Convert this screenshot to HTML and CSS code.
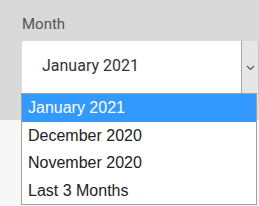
FILE: index.html
```html
<!DOCTYPE html>
<html lang="en">
<head>
    <meta charset="UTF-8" />
    <meta name="viewport" content="width=device-width, initial-scale=1" />
    <title>Month</title>
    <link rel="stylesheet" href="styles.css">
</head>
<body>
    <div class="filter">
        <label class="filter-label">Month</label>
        <div class="select">
            <span class="select-value">January 2021</span>
            <span class="select-arrow">
                <svg width="9" height="6" viewBox="0 0 9 6"><path d="M1 1l3.5 3.5L8 1" fill="none" stroke="#555" stroke-width="1.2"/></svg>
            </span>
            <ul class="options">
                <li class="option selected">January 2021</li>
                <li class="option">December 2020</li>
                <li class="option">November 2020</li>
                <li class="option">Last 3 Months</li>
            </ul>
        </div>
    </div>
    <div class="page-rest"></div>
</body>
</html>
```

FILE: styles.css
```css
body {
    margin: 0;
    background-color: #f7f7f7;
    font-family: 'Liberation Sans', Arial, sans-serif;
}

.filter {
    background-color: #d9d9d9;
    height: 105px;
    padding: 15px 0 0 22px;
}

.page-rest {
    height: 86px;
}

.filter-label {
    display: block;
    font-family: Roboto, sans-serif;
    font-size: 15px;
    line-height: 18px;
    color: #555;
}

.select {
    position: relative;
    display: flex;
    margin-top: 8px;
    height: 60px;
    background-color: #fff;
    border-radius: 2px 0 0 0;
}

.select-value {
    flex: 1;
    padding: 15px 0 0 20px;
    font-family: Roboto, sans-serif;
    font-size: 16px;
    color: #333;
}

.select-arrow {
    width: 16px;
    display: flex;
    align-items: center;
    justify-content: center;
    padding-bottom: 6px;
    background-color: #e6e6e6;
    border-left: 1px solid #a8a8a8;
    border-right: 1px solid #c8c8c8;
}

.options {
    position: absolute;
    top: 52px;
    left: -1px;
    width: 234px;
    margin: 0;
    padding: 0;
    list-style: none;
    background-color: #fff;
    border: 1px solid #a0a0a0;
}

.option {
    height: 27.5px;
    line-height: 27.5px;
    padding-left: 6px;
    font-size: 16px;
    color: #222;
}

.option.selected {
    background-color: #3399ff;
    color: #fff;
}
```
